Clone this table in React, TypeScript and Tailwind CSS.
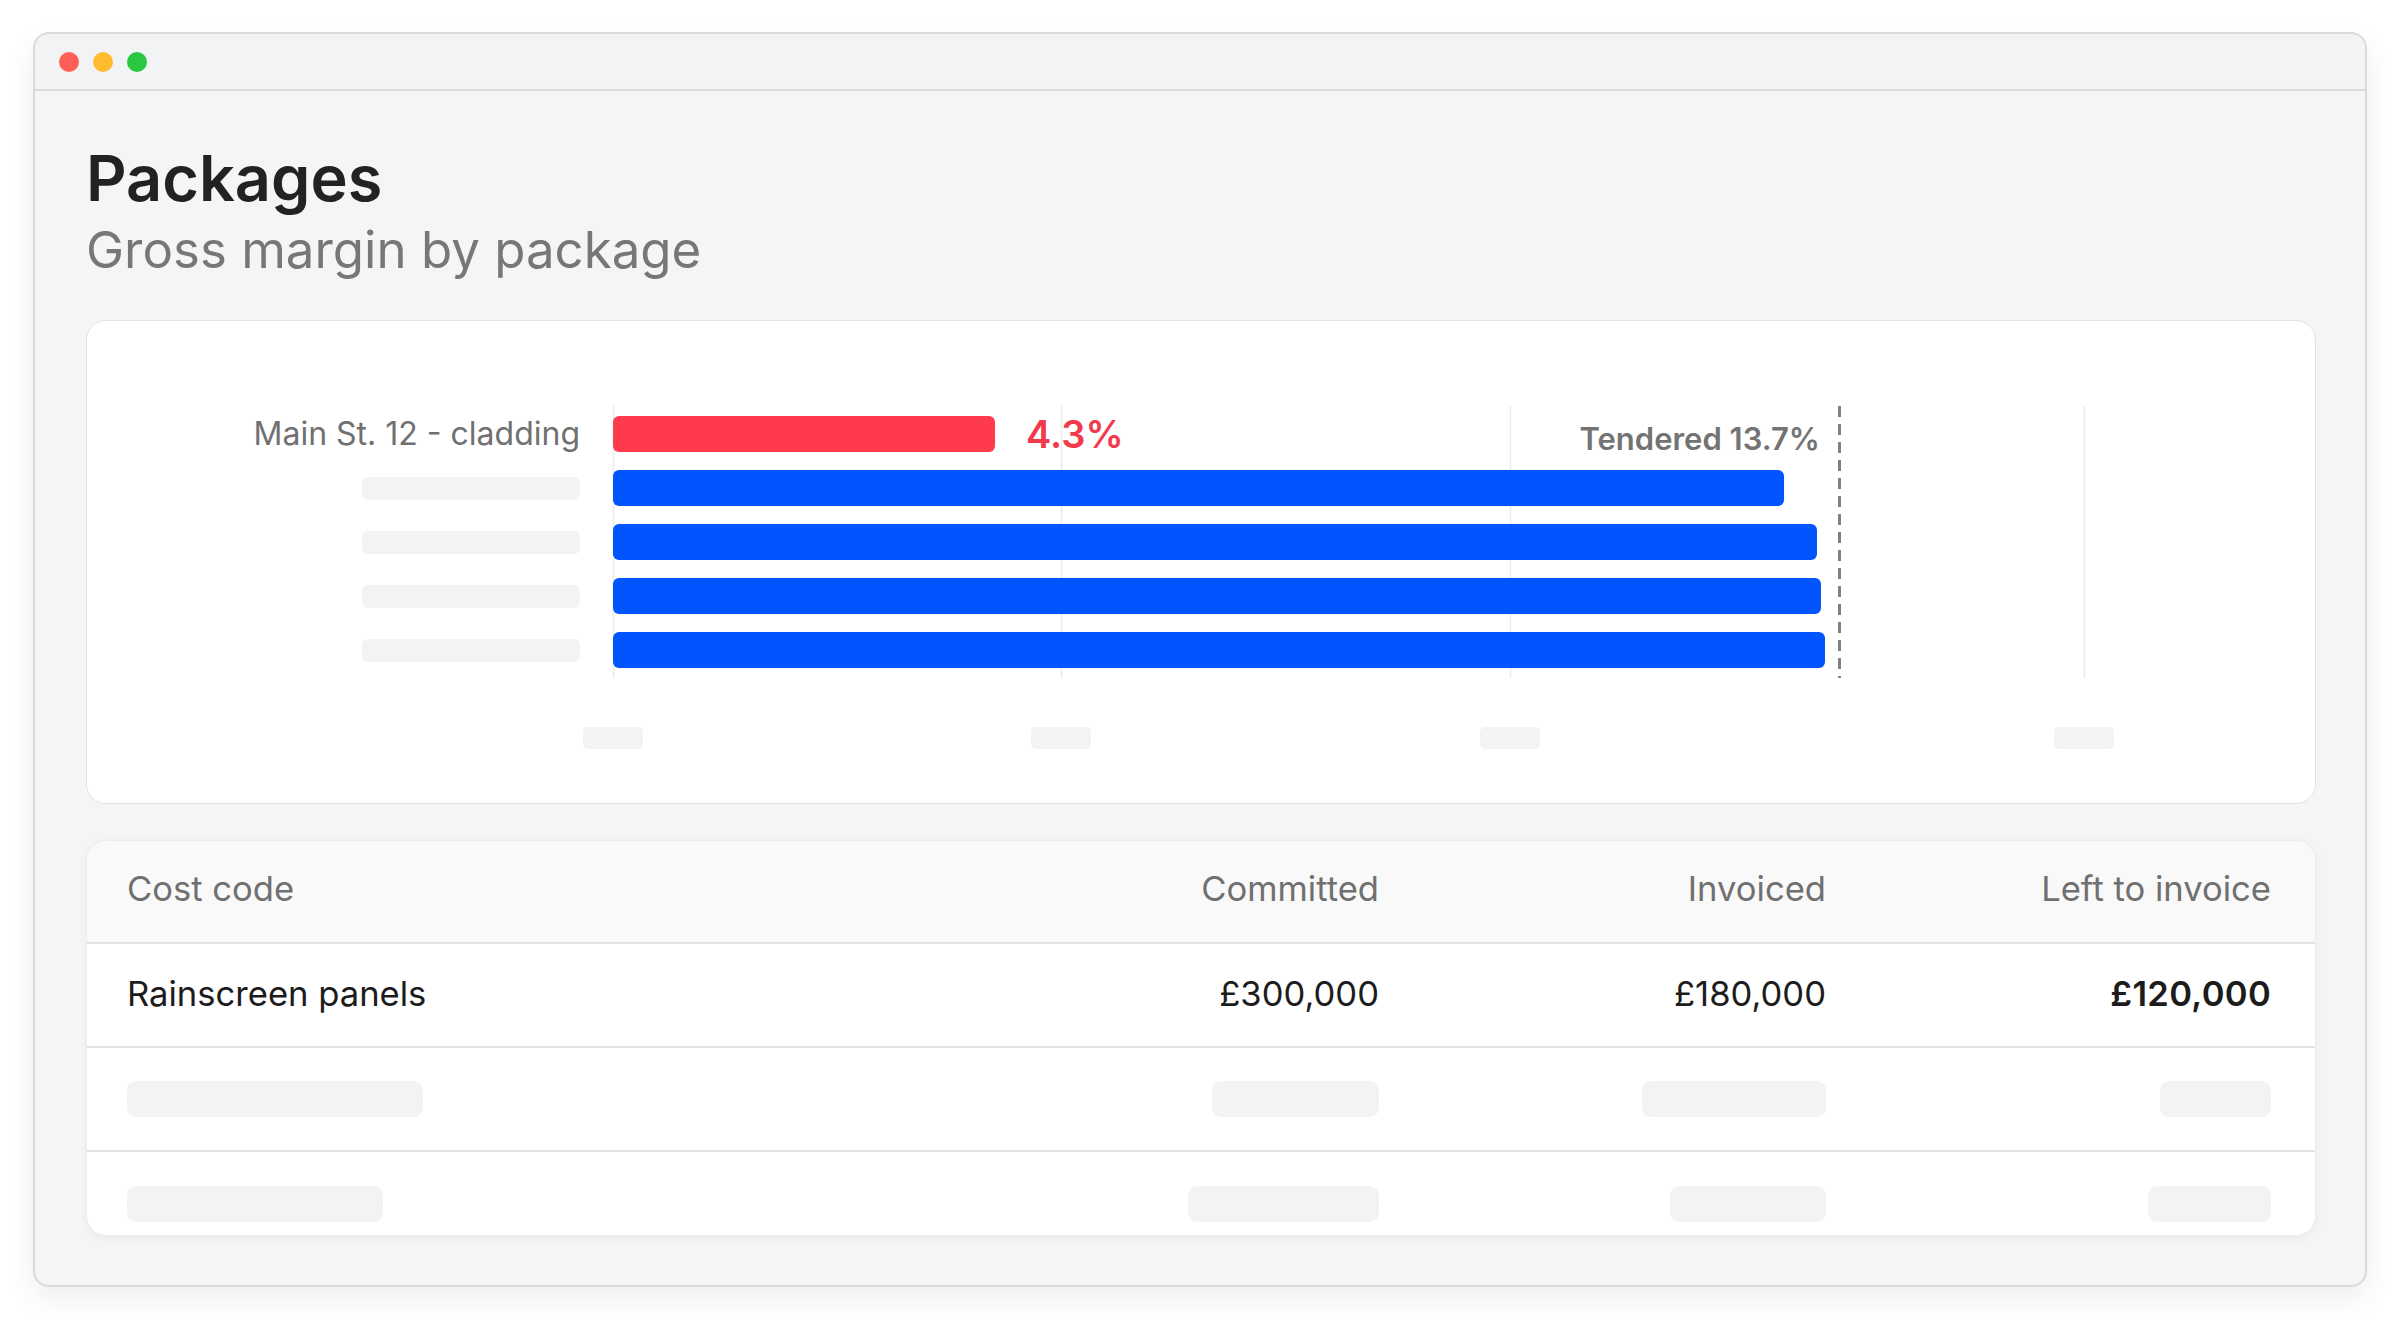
import React from 'react';

const Skeleton = ({ className }: { className: string }) => (
  <div className={`bg-[#f2f3f4] ${className}`} />
);

const blueBars = [1171, 1204, 1208, 1212];
const labelSkeletons = [0, 1, 2, 3];

const MarginChart = () => (
  <div className="h-[484px] rounded-[20px] border border-[#e2e2e2] bg-white pt-[85px]">
    <div className="flex">
      {/* labels */}
      <div className="w-[493px] flex flex-col gap-[18px] pt-[10px]">
        <div className="h-[36px] flex items-center justify-end text-[32px] leading-none text-[#707070]">
          Main St. 12 - cladding
        </div>
        {labelSkeletons.map((i) => (
          <div key={i} className="h-[36px] flex items-center justify-end">
            <Skeleton className="w-[218px] h-[23px] rounded-[6px]" />
          </div>
        ))}
      </div>

      {/* plot */}
      <div className="ml-[33px] w-[1471px] h-[272px] relative">
        <svg className="absolute inset-0 overflow-visible" width="1471" height="272">
          {[0.5, 448.5, 897.5, 1471.5].map((x) => (
            <line key={x} x1={x} x2={x} y1={0} y2={272} stroke="#ebebeb" strokeWidth={1.5} />
          ))}
        </svg>
        <div className="relative flex flex-col gap-[18px] pt-[10px]">
          <div className="h-[36px] flex items-center">
            <div className="w-[382px] h-[36px] rounded-[6px] bg-[#ff3a4d]" />
            <span className="ml-[31px] text-[38px] leading-none font-semibold text-[#f23a4c]">4.3%</span>
          </div>
          {blueBars.map((w) => (
            <div key={w} className="h-[36px] flex items-center">
              <div className="h-[36px] rounded-[6px] bg-[#0055ff]" style={{ width: w }} />
            </div>
          ))}
        </div>
        <svg className="absolute top-0 left-[1225px] overflow-visible" width="3" height="272">
          <line x1={1.5} x2={1.5} y1={0} y2={272} stroke="#808080" strokeWidth={3} strokeDasharray="11 7" />
        </svg>
        <span className="absolute top-[17px] right-[264px] text-[31px] leading-none font-semibold text-[#737373]">
          Tendered 13.7%
        </span>
      </div>
    </div>

    {/* axis ticks */}
    <div className="flex mt-[49px] ml-[496px]">
      <Skeleton className="w-[60px] h-[22px] rounded-[5px]" />
      <Skeleton className="ml-[388px] w-[60px] h-[22px] rounded-[5px]" />
      <Skeleton className="ml-[389px] w-[60px] h-[22px] rounded-[5px]" />
      <Skeleton className="ml-[514px] w-[60px] h-[22px] rounded-[5px]" />
    </div>
  </div>
);

const rowGrid = 'grid grid-cols-[1fr_447px_447px_445px] items-center pl-[40px] pr-[44px]';

const PackagesTable = () => (
  <div className="mt-[36px] h-[396px] overflow-hidden rounded-[20px] border border-[#ececec] bg-white shadow-[0_2px_8px_rgba(0,0,0,0.05)]">
    <div className={`${rowGrid} h-[103px] pb-[5px] bg-[#f9f9f9] border-b-2 border-[#e1e4e6] text-[34.6px] text-[#707070]`}>
      <div>Cost code</div>
      <div className="text-right">Committed</div>
      <div className="text-right">Invoiced</div>
      <div className="text-right">Left to invoice</div>
    </div>
    <div className={`${rowGrid} h-[104px] pb-[3px] border-b-2 border-[#e1e4e6] text-[34.6px] text-[#1c1c1c]`}>
      <div>Rainscreen panels</div>
      <div className="text-right">£300,000</div>
      <div className="text-right">£180,000</div>
      <div className="text-right font-semibold tracking-[0.3px]">£120,000</div>
    </div>
    <div className={`${rowGrid} h-[104px] border-b-2 border-[#e1e4e6]`}>
      <Skeleton className="w-[296px] h-[36px] rounded-[9px]" />
      <div className="flex justify-end"><Skeleton className="w-[167px] h-[36px] rounded-[9px]" /></div>
      <div className="flex justify-end"><Skeleton className="w-[184px] h-[36px] rounded-[9px]" /></div>
      <div className="flex justify-end"><Skeleton className="w-[111px] h-[36px] rounded-[9px]" /></div>
    </div>
    <div className={`${rowGrid} h-[104px]`}>
      <Skeleton className="w-[256px] h-[36px] rounded-[9px]" />
      <div className="flex justify-end"><Skeleton className="w-[191px] h-[36px] rounded-[9px]" /></div>
      <div className="flex justify-end"><Skeleton className="w-[156px] h-[36px] rounded-[9px]" /></div>
      <div className="flex justify-end"><Skeleton className="w-[123px] h-[36px] rounded-[9px]" /></div>
    </div>
  </div>
);

export default function App() {
  return (
    <div className="w-[2400px] h-[1320px] bg-white pt-[32px] px-[33px] font-['Inter',sans-serif]">
      <div className="h-[1255px] rounded-[16px] border-2 border-[#dadada] bg-[#f5f5f5] overflow-hidden shadow-[0_12px_30px_rgba(0,0,0,0.07)]">
        <div className="h-[57px] flex items-center gap-[14px] pl-[24px] bg-[#f2f3f4] border-b-2 border-[#dcdcdc]">
          <span className="w-[20px] h-[20px] rounded-full bg-[#ff5f57]" />
          <span className="w-[20px] h-[20px] rounded-full bg-[#febc2e]" />
          <span className="w-[20px] h-[20px] rounded-full bg-[#28c840]" />
        </div>
        <div className="pl-[51px] pr-[49px] pt-[56px]">
          <h1 className="text-[63px] leading-none font-semibold text-[#222222]">Packages</h1>
          <p className="mt-[14px] text-[51px] leading-none text-[#777777]">Gross margin by package</p>
          <div className="mt-[45px]">
            <MarginChart />
          </div>
          <PackagesTable />
        </div>
      </div>
    </div>
  );
}
